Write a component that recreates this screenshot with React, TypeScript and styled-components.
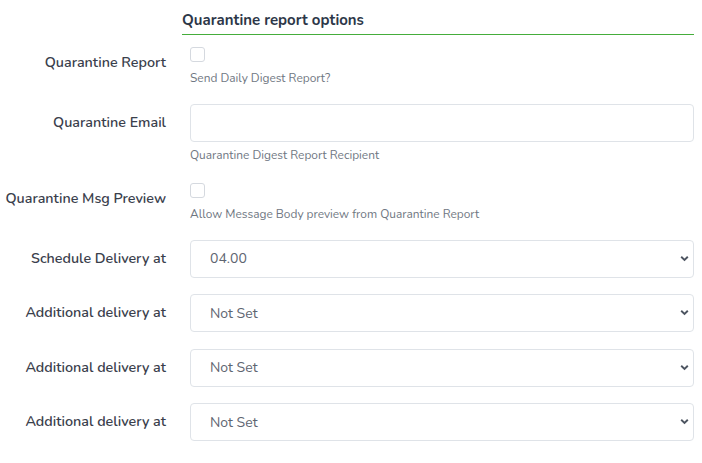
import * as React from 'react'
import styled, { createGlobalStyle } from 'styled-components'

const GlobalStyle = createGlobalStyle`
  body {
    margin: 0;
    background: #fff;
    font-family: Nunito, Lato, "Open Sans", sans-serif;
    color: #2d3748;
  }
`

const Form = styled.form`
  width: 702px;
  padding-right: 8px;
  box-sizing: border-box;
`

const Row = styled.div<{ $gap?: number }>`
  display: grid;
  grid-template-columns: 166px 504px;
  column-gap: 24px;
  margin-bottom: ${p => p.$gap ?? 16.5}px;
`

const SectionHeading = styled.h3`
  grid-column: 2;
  margin: 0 0 0 -8px;
  padding: 10px 0 4px;
  font-size: 15px;
  line-height: 20px;
  font-weight: 700;
  color: #2d3748;
  border-bottom: 1px solid #45ad3b;
`

const Label = styled.label`
  padding-top: 8px;
  font-size: 14.3px;
  line-height: 21px;
  font-weight: 600;
  color: #3a404c;
  text-align: right;
  white-space: nowrap;
`

const Control = styled.div`
  display: flex;
  flex-direction: column;
`

const CheckLine = styled.div`
  height: 21px;
  display: flex;
  align-items: center;
`

const Check = styled.input.attrs({ type: 'checkbox' })`
  appearance: none;
  margin: 0;
  width: 15px;
  height: 15px;
  border: 1px solid #d5d9df;
  border-radius: 3px;
  background: #fff;
  box-sizing: border-box;
`

const TextInput = styled.input`
  height: 38px;
  box-sizing: border-box;
  border: 1px solid #dfe3e8;
  border-radius: 4px;
  padding: 0 12px;
  font: inherit;
  font-size: 14px;
`

const Note = styled.small`
  display: block;
  margin-top: 5px;
  font-size: 11.9px;
  line-height: 17px;
  color: #6f7782;
`

const SelectWrap = styled.div`
  position: relative;
`

const Select = styled.select`
  appearance: none;
  width: 100%;
  height: 38px;
  box-sizing: border-box;
  border: 1px solid #dfe3e8;
  border-radius: 4px;
  background: #fff;
  padding: 0 30px 0 19px;
  font: inherit;
  font-size: 14px;
  color: #5e6571;
`

const Chevron = styled.svg`
  position: absolute;
  right: 5px;
  top: 15px;
  pointer-events: none;
`

function Dropdown({ value }: { value: string }) {
  return (
    <SelectWrap>
      <Select defaultValue={value}>
        <option>{value}</option>
      </Select>
      <Chevron width="9" height="7" viewBox="0 0 9 7">
        <path d="M1.2 1.8 L4.5 5 L7.8 1.8" fill="none" stroke="#4d5561" strokeWidth="1.9" />
      </Chevron>
    </SelectWrap>
  )
}

const deliveries = ['Not Set', 'Not Set', 'Not Set']

export default function App() {
  return (
    <>
      <GlobalStyle />
      <Form>
        <Row $gap={9}>
          <SectionHeading>Quarantine report options</SectionHeading>
        </Row>
        <Row>
          <Label>Quarantine Report</Label>
          <Control>
            <CheckLine><Check /></CheckLine>
            <Note>Send Daily Digest Report?</Note>
          </Control>
        </Row>
        <Row>
          <Label>Quarantine Email</Label>
          <Control>
            <TextInput type="email" />
            <Note>Quarantine Digest Report Recipient</Note>
          </Control>
        </Row>
        <Row>
          <Label>Quarantine Msg Preview</Label>
          <Control>
            <CheckLine><Check /></CheckLine>
            <Note>Allow Message Body preview from Quarantine Report</Note>
          </Control>
        </Row>
        <Row>
          <Label>Schedule Delivery at</Label>
          <Dropdown value="04.00" />
        </Row>
        {deliveries.map((v, i) => (
          <Row key={i}>
            <Label>Additional delivery at</Label>
            <Dropdown value={v} />
          </Row>
        ))}
      </Form>
    </>
  )
}
